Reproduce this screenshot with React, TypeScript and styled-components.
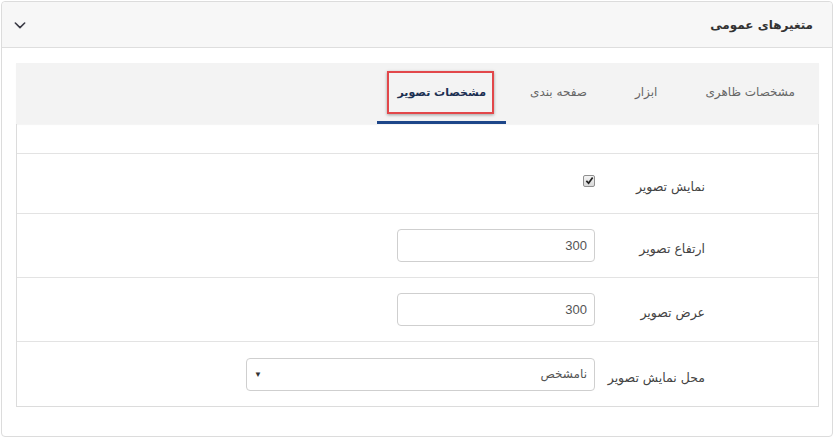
import React from "react";
import styled, { createGlobalStyle } from "styled-components";

const Global = createGlobalStyle`
  html, body { margin: 0; padding: 0; background: #ffffff; }
  body { font-family: "DejaVu Sans", "Noto Sans", sans-serif; }
  * { box-sizing: border-box; }
`;

const Page = styled.div`
  width: 836px;
  height: 439px;
  padding: 1px 3px 2px 1px;
`;

const Panel = styled.section`
  direction: rtl;
  height: 100%;
  border: 1px solid #dcdcdc;
  border-radius: 4px;
  background: #fff;
  display: flex;
  flex-direction: column;
`;

const Header = styled.header`
  height: 46px;
  flex: none;
  background: #f7f7f7;
  border-bottom: 1px solid #dedede;
  border-radius: 4px 4px 0 0;
  display: flex;
  align-items: center;
  justify-content: space-between;
  padding: 0 19px 0 10px;
`;

const Title = styled.h2`
  margin: 0;
  font-size: 12px;
  font-weight: bold;
  color: #333;
`;

const Toggle = styled.button`
  border: 0;
  background: none;
  padding: 0;
  display: flex;
  color: #3a3a45;
`;

const Body = styled.div`
  padding: 15px 13px 30px 14px;
`;

const Tabs = styled.nav`
  height: 61px;
  background: #f3f3f3;
  display: flex;
  align-items: stretch;
  box-shadow: 0 1px 1px rgba(0, 0, 0, 0.04);
`;

const Tab = styled.div<{ $active?: boolean; $pad: number }>`
  position: relative;
  display: flex;
  align-items: center;
  padding: 0 ${(p) => p.$pad}px;
  font-size: ${(p) => (p.$active ? "11px" : "12px")};
  color: ${(p) => (p.$active ? "#1b2f52" : "#666")};
  font-weight: ${(p) => (p.$active ? "bold" : "normal")};
  border-bottom: 3px solid ${(p) => (p.$active ? "#1d4689" : "transparent")};
`;

const Highlight = styled.span`
  position: absolute;
  top: 8px;
  bottom: 7px;
  left: 10px;
  right: 12px;
  border: 2px solid #e2474a;
  box-shadow: 0 1px 3px rgba(0, 0, 0, 0.35);
  pointer-events: none;
`;

const Table = styled.div`
  border: 1px solid #dcdcdc;
  border-top: 0;
`;

const Spacer = styled.div`
  height: 30px;
  border-bottom: 1px solid #e3e3e3;
`;

const Row = styled.div<{ $h: number; $last?: boolean }>`
  height: ${(p) => p.$h}px;
  display: flex;
  align-items: center;
  border-bottom: ${(p) => (p.$last ? "0" : "1px solid #e3e3e3")};
  padding-right: 113px;
`;

const Label = styled.div`
  width: 110px;
  font-size: 12.5px;
  color: #444;
  padding-top: 6px;
  flex: none;
`;

const Control = styled.div`
  flex: 1;
  display: flex;
`;

const Box = styled.span`
  width: 12px;
  height: 12px;
  border: 1px solid #8f8f8f;
  border-radius: 2px;
  background: linear-gradient(#f4f4f4, #d8d8d8);
  display: flex;
  align-items: center;
  justify-content: center;
  margin-top: -6px;
`;

const Input = styled.div<{ $w: number }>`
  width: ${(p) => p.$w}px;
  height: 33px;
  border: 1px solid #cfcfcf;
  border-radius: 4px;
  display: flex;
  align-items: center;
  justify-content: space-between;
  padding: 0 7px;
  font-family: "Liberation Sans", "DejaVu Sans", sans-serif;
  font-size: 13px;
  color: #555;
  background: #fff;
`;

const Value = styled.span`
  font-family: "DejaVu Sans", sans-serif;
  font-size: 12px;
  color: #555;
`;

const Arrow = styled.span`
  font-size: 8px;
  color: #333;
`;

export default function App() {
  return (
    <Page>
      <Global />
      <Panel>
        <Header>
          <Title>متغیرهای عمومی</Title>
          <Toggle aria-label="toggle">
            <svg width="16" height="16" viewBox="0 0 24 24" fill="none" stroke="currentColor" strokeWidth="2.4" strokeLinecap="round" strokeLinejoin="round">
              <path d="m5 9 7 7 7-7" />
            </svg>
          </Toggle>
        </Header>
        <Body>
          <Tabs>
            <Tab $pad={24}>مشخصات ظاهری</Tab>
            <Tab $pad={24}>ابزار</Tab>
            <Tab $pad={24}>صفحه بندی</Tab>
            <Tab $pad={20} $active>
              مشخصات تصویر
              <Highlight />
            </Tab>
          </Tabs>
          <Table>
            <Spacer />
            <Row $h={60}>
              <Label>نمایش تصویر</Label>
              <Control>
                <Box>
                  <svg width="9" height="9" viewBox="0 0 10 10">
                    <path d="M1.5 5.5 L4 8 L8.5 1.8" fill="none" stroke="#222" strokeWidth="1.9" />
                  </svg>
                </Box>
              </Control>
            </Row>
            <Row $h={64}>
              <Label>ارتفاع تصویر</Label>
              <Control>
                <Input $w={198}>300</Input>
              </Control>
            </Row>
            <Row $h={64}>
              <Label>عرض تصویر</Label>
              <Control>
                <Input $w={198}>300</Input>
              </Control>
            </Row>
            <Row $h={64} $last>
              <Label>محل نمایش تصویر</Label>
              <Control>
                <Input $w={349}>
                  <Value>نامشخص</Value>
                  <Arrow>▼</Arrow>
                </Input>
              </Control>
            </Row>
          </Table>
        </Body>
      </Panel>
    </Page>
  );
}
